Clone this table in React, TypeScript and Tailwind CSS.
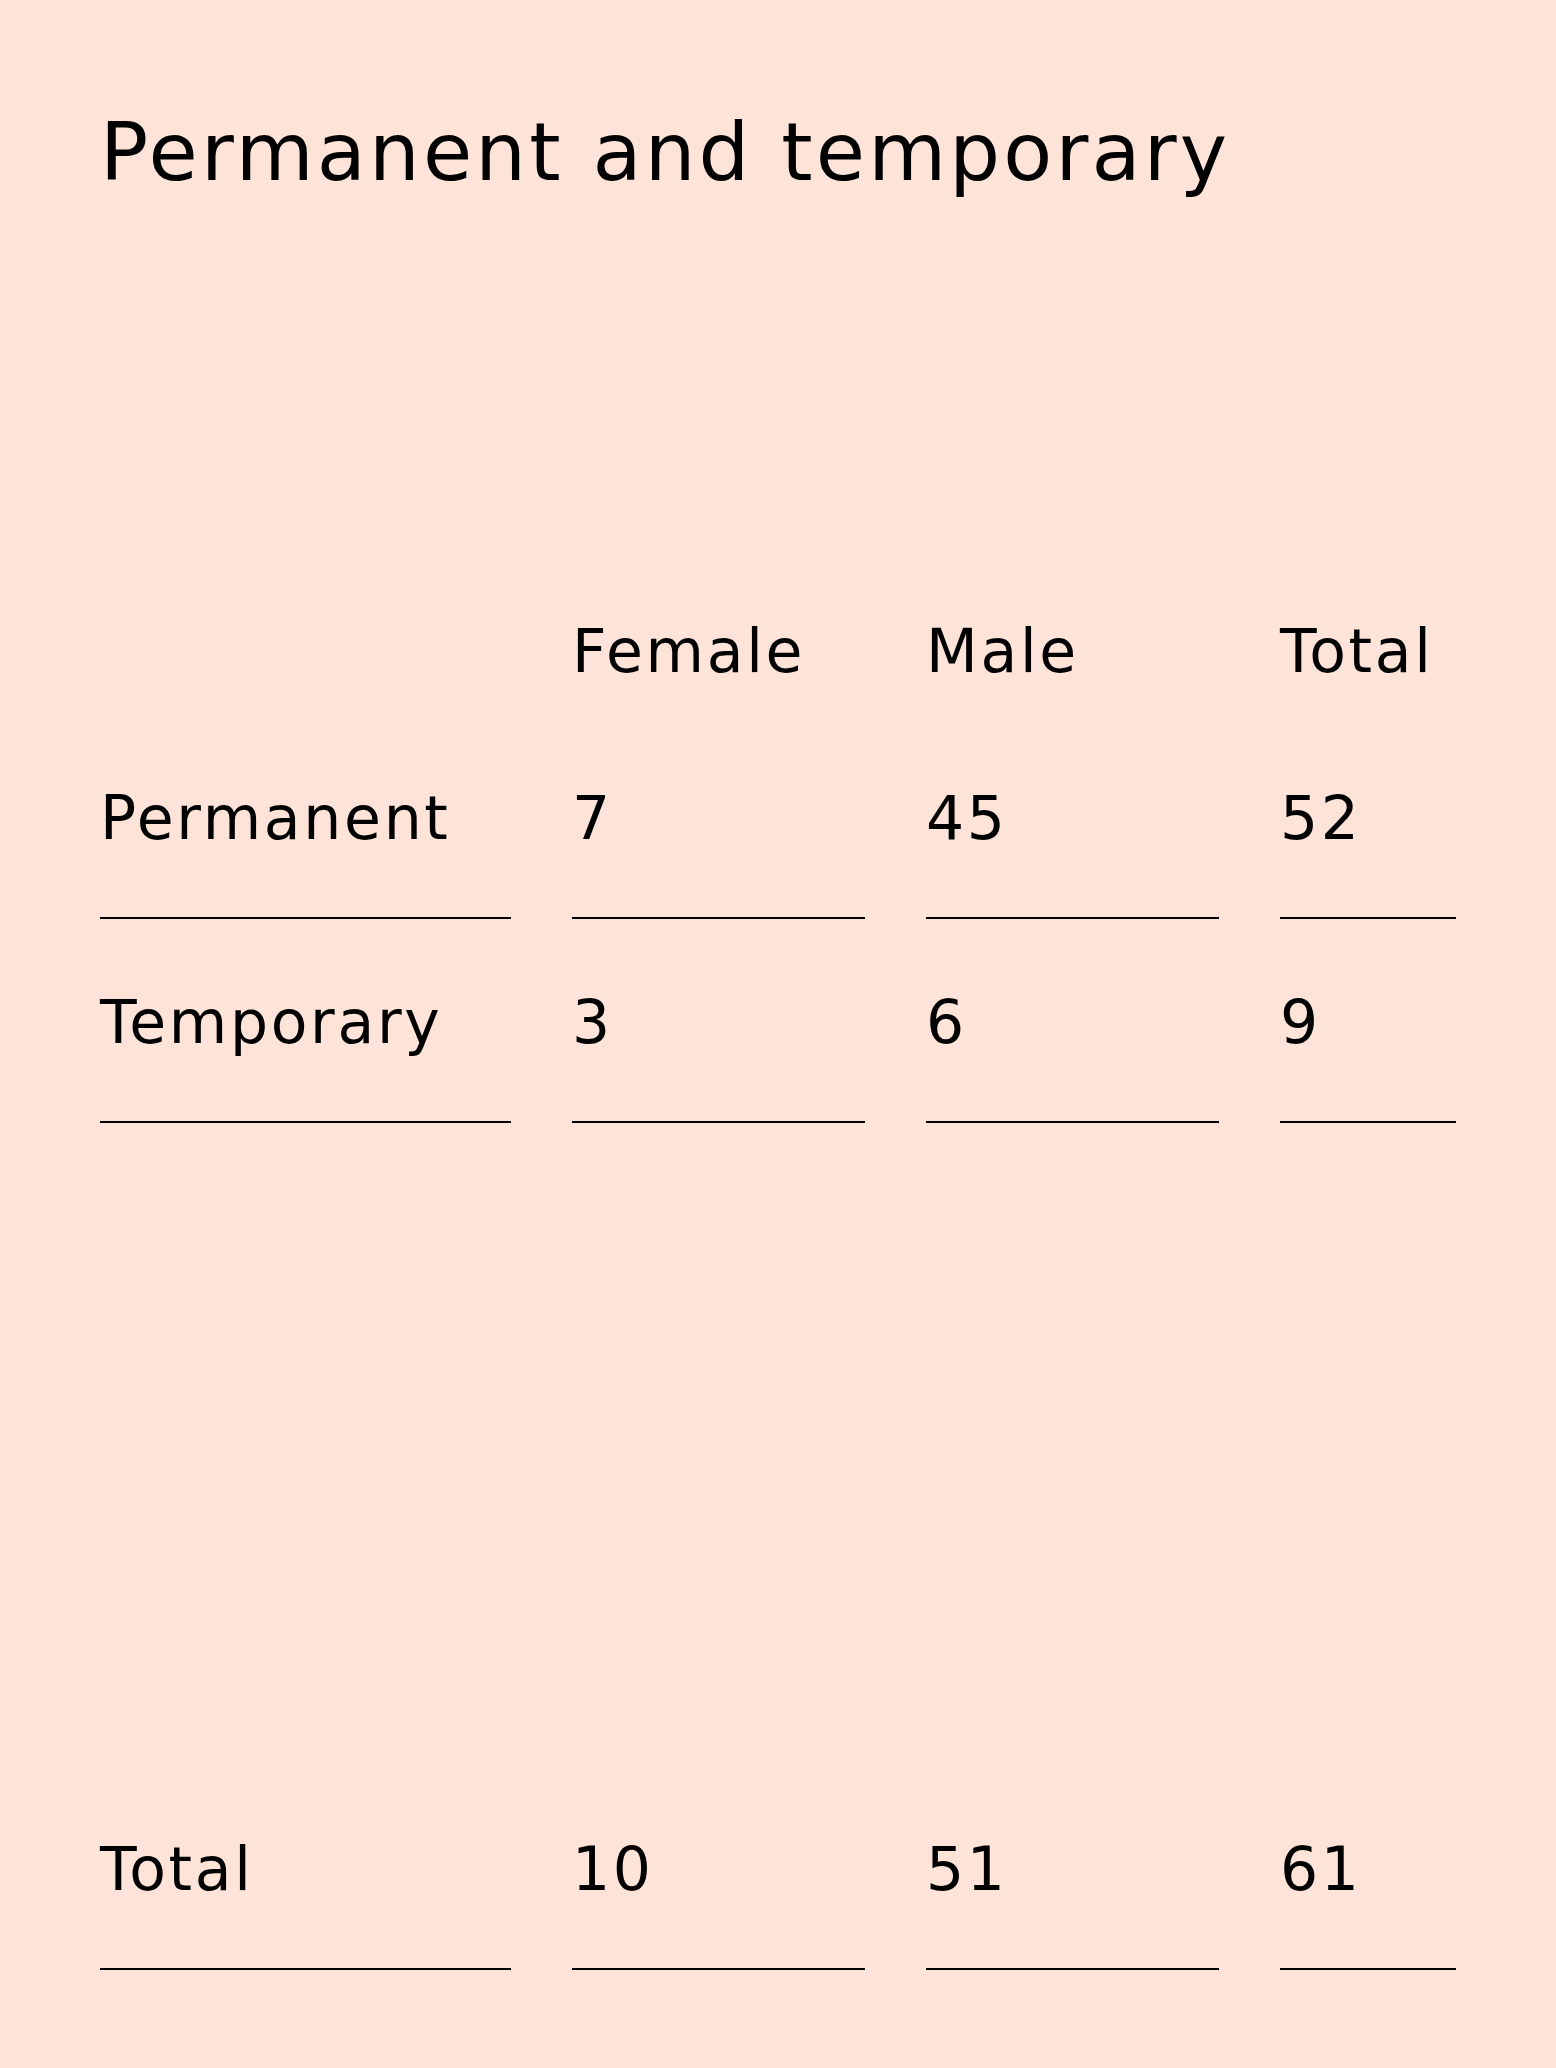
import React from "react";

const rows = [
  { label: "Permanent", f: "7", m: "45", t: "52", mt: "mt-[107px]" },
  { label: "Temporary", f: "3", m: "6", t: "9", mt: "mt-[73px]" },
  { label: "Total", f: "10", m: "51", t: "61", mt: "mt-[716px]" },
];

const font = { fontFamily: '"DejaVu Sans", "Liberation Sans", sans-serif' };

function Cell({ children }: { children?: React.ReactNode }) {
  return (
    <div className="border-b-2 border-black pb-[69px] text-[60px] leading-[60px] tracking-[0.045em]">
      {children}
    </div>
  );
}

export default function App() {
  return (
    <div
      className="min-h-screen w-full bg-[#fee4d8] px-[100px] pt-[113px] pb-[95px] text-black"
      style={font}
    >
      <h1 className="text-[80px] leading-[80px] font-normal tracking-[0.04em]">
        Permanent and temporary
      </h1>

      <div className="mt-[428px] grid grid-cols-[411px_293px_293px_176px] gap-x-[61px] text-[60px] leading-[60px] tracking-[0.045em]">
        <div></div>
        <div>Female</div>
        <div>Male</div>
        <div>Total</div>
      </div>

      {rows.map((r) => (
        <div
          key={r.label}
          className={`${r.mt} grid grid-cols-[411px_293px_293px_176px] gap-x-[61px]`}
        >
          <Cell>{r.label}</Cell>
          <Cell>{r.f}</Cell>
          <Cell>{r.m}</Cell>
          <Cell>{r.t}</Cell>
        </div>
      ))}
    </div>
  );
}
